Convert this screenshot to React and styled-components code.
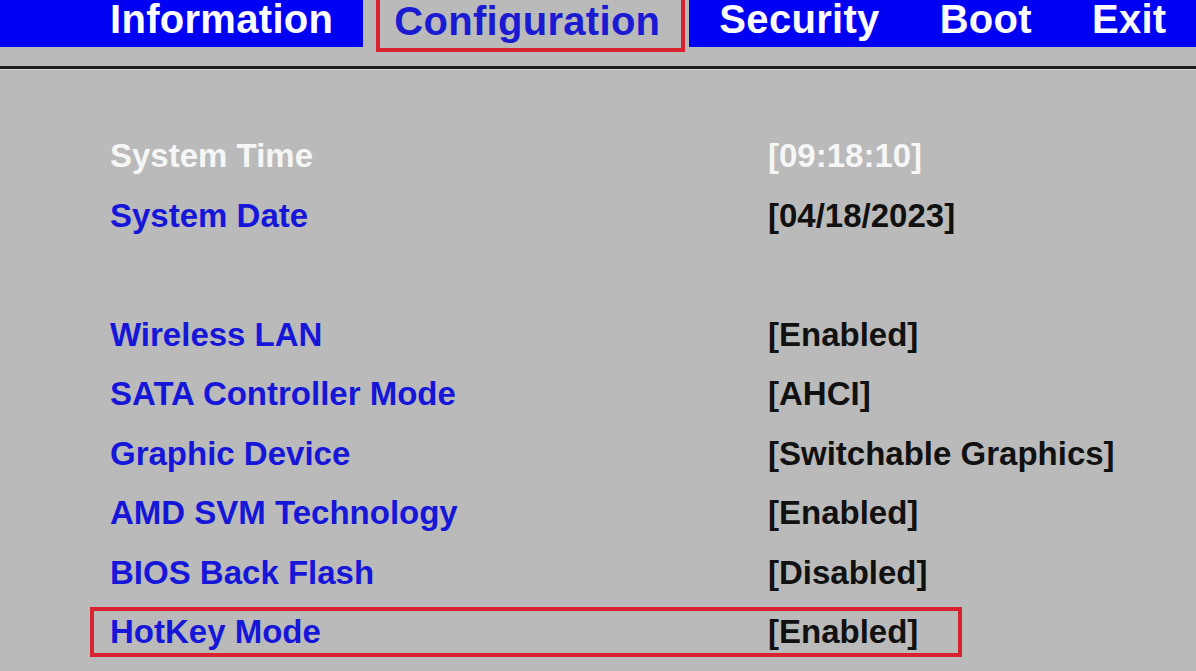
import styled, { createGlobalStyle } from 'styled-components';

const rows = [
  { label: 'System Time', value: '[09:18:10]', current: true },
  { label: 'System Date', value: '[04/18/2023]' },
  null,
  { label: 'Wireless LAN', value: '[Enabled]' },
  { label: 'SATA Controller Mode', value: '[AHCI]' },
  { label: 'Graphic Device', value: '[Switchable Graphics]' },
  { label: 'AMD SVM Technology', value: '[Enabled]' },
  { label: 'BIOS Back Flash', value: '[Disabled]' },
  { label: 'HotKey Mode', value: '[Enabled]', marked: true },
];

const GlobalStyle = createGlobalStyle`
  html, body {
    margin: 0;
    padding: 0;
    background: #bababa;
    overflow: hidden;
  }
  body {
    font-family: "Liberation Sans", Arial, sans-serif;
  }
`

const App = () => {
  return (
    <Screen>
      <GlobalStyle />
      <Menu>
        <Tab $first>Information</Tab>
        <ActiveSlot>
          <ActiveTab>Configuration</ActiveTab>
        </ActiveSlot>
        <Tab>Security</Tab>
        <Tab>Boot</Tab>
        <Tab $fill>Exit</Tab>
      </Menu>
      <Divider />
      <List>
        {rows.map((row, i) =>
          row ? (
            <Row key={i} $marked={row.marked}>
              <Label $current={row.current}>{row.label}</Label>
              <Value $current={row.current}>{row.value}</Value>
            </Row>
          ) : (
            <Row key={i} />
          )
        )}
      </List>
    </Screen>
  );
}

const Screen = styled.div`
  width: 1196px;
  height: 671px;
  background: #bababa;
  overflow: hidden;
`

const Menu = styled.nav`
  display: flex;
  align-items: flex-start;
  height: 47px;
  font-size: 40px;
  font-weight: bold;
  letter-spacing: 0.3px;
  white-space: nowrap;
`

const Tab = styled.div`
  height: 47px;
  line-height: 39px;
  padding: 0 30px 0 ${p => (p.$first ? '110px' : '30px')};
  background: #0000f2;
  color: #fafaff;
  flex: ${p => (p.$fill ? 1 : 'none')};
`

const ActiveSlot = styled.div`
  height: 47px;
  padding: 0 4px 0 13px;
`

const ActiveTab = styled.div`
  box-sizing: border-box;
  height: 56px;
  margin-top: -4px;
  border: 4px solid #d8232f;
  line-height: 39px;
  padding: 2px 21px 0 14px;
  color: #1a1ad2;
`

const Divider = styled.div`
  margin-top: 19px;
  height: 3px;
  background: #1c1c1c;
  border-bottom: 1px solid #cfcfcf;
`

const List = styled.div`
  display: flex;
  flex-direction: column;
  gap: 9.5px;
  padding: 61px 0 0 90px;
`

const Row = styled.div`
  box-sizing: border-box;
  display: grid;
  grid-template-columns: 658px auto;
  width: 872px;
  height: 50px;
  padding-left: 16px;
  border: 4px solid ${p => (p.$marked ? '#d8232f' : 'transparent')};
  line-height: 42px;
  font-size: 33px;
  font-weight: bold;
  white-space: nowrap;
`

const Label = styled.span`
  color: ${p => (p.$current ? '#f6f6f6' : '#1616d8')};
`

const Value = styled.span`
  color: ${p => (p.$current ? '#f6f6f6' : '#111111')};
`

export default App;
